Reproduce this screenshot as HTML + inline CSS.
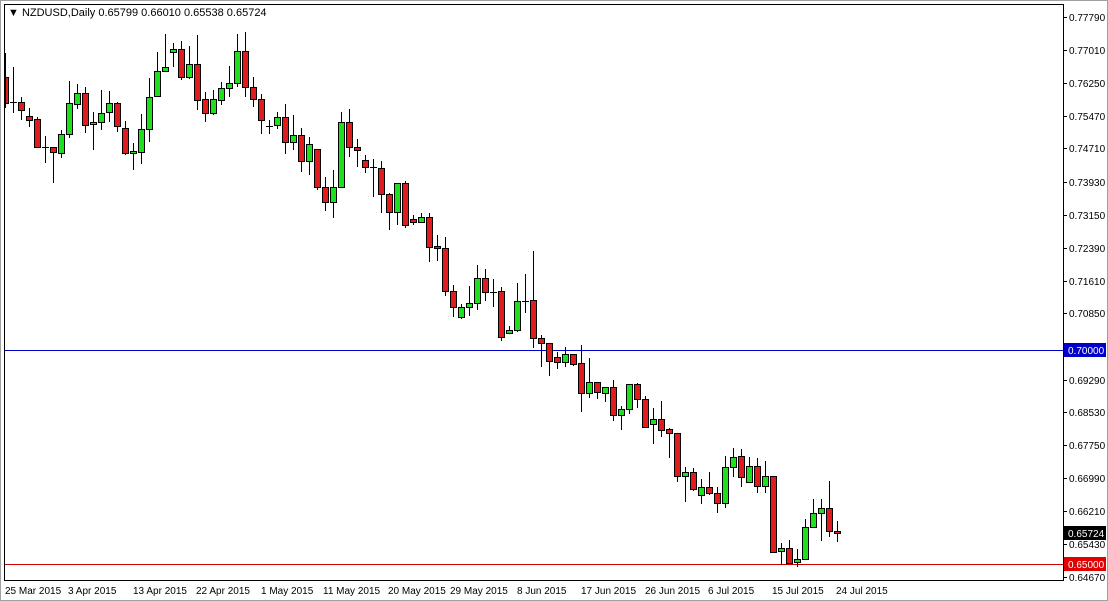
<!DOCTYPE html>
<html><head><meta charset="utf-8"><style>
html,body{margin:0;padding:0;background:#fff}
body{width:1108px;height:601px;overflow:hidden;position:relative}
svg{position:absolute;left:0;top:0}
svg text{font-family:"Liberation Sans",sans-serif;font-size:10px;fill:#000}
.r{fill:#e01c1c;stroke:#000;stroke-width:1}
.g{fill:#1ee01e;stroke:#000;stroke-width:1}
.w{stroke:#000;stroke-width:1}
</style></head><body>
<svg width="1108" height="601" viewBox="0 0 1108 601" shape-rendering="crispEdges">
<rect x="0" y="0" width="1108" height="601" fill="#fff"/>
<rect x="0.5" y="0.5" width="1107" height="600" fill="none" stroke="#a0a0a0"/>
<rect x="4.5" y="4.5" width="1059" height="576" fill="none" stroke="#000"/>
<line x1="5" y1="350.5" x2="1063" y2="350.5" stroke="#0000c8"/>
<line x1="5" y1="564.5" x2="1063" y2="564.5" stroke="#c80000"/>
<text x="8" y="16" style="font-size:11px">&#9660; NZDUSD,Daily  0.65799 0.66010 0.65538 0.65724</text>
<g>
<line class="w" x1="5.5" y1="53" x2="5.5" y2="108"/><rect class="r" x="5.5" y="77.5" width="3" height="26"/>
<line class="w" x1="13.5" y1="67" x2="13.5" y2="113"/><line class="w" x1="10" y1="102.5" x2="17" y2="102.5"/>
<line class="w" x1="21.5" y1="97" x2="21.5" y2="120"/><rect class="r" x="18.5" y="102.5" width="6" height="8"/>
<line class="w" x1="29.5" y1="108" x2="29.5" y2="127"/><rect class="r" x="26.5" y="116.5" width="6" height="4"/>
<line class="w" x1="37.5" y1="117" x2="37.5" y2="147"/><rect class="r" x="34.5" y="119.5" width="6" height="28"/>
<line class="w" x1="45.5" y1="136" x2="45.5" y2="163"/><line class="w" x1="42" y1="147.5" x2="49" y2="147.5"/>
<line class="w" x1="53.5" y1="147" x2="53.5" y2="183"/><rect class="r" x="50.5" y="147.5" width="6" height="5"/>
<line class="w" x1="61.5" y1="130" x2="61.5" y2="158"/><rect class="g" x="58.5" y="134.5" width="6" height="19"/>
<line class="w" x1="69.5" y1="81" x2="69.5" y2="138"/><rect class="g" x="66.5" y="103.5" width="6" height="31"/>
<line class="w" x1="77.5" y1="84" x2="77.5" y2="109"/><rect class="g" x="74.5" y="93.5" width="6" height="11"/>
<line class="w" x1="85.5" y1="87" x2="85.5" y2="133"/><rect class="r" x="82.5" y="93.5" width="6" height="32"/>
<line class="w" x1="93.5" y1="112" x2="93.5" y2="150"/><rect class="g" x="90.5" y="122.5" width="6" height="2"/>
<line class="w" x1="101.5" y1="90" x2="101.5" y2="130"/><rect class="g" x="98.5" y="113.5" width="6" height="9"/>
<line class="w" x1="109.5" y1="91" x2="109.5" y2="122"/><rect class="g" x="106.5" y="103.5" width="6" height="9"/>
<line class="w" x1="117.5" y1="102" x2="117.5" y2="132"/><rect class="r" x="114.5" y="103.5" width="6" height="23"/>
<line class="w" x1="125.5" y1="121" x2="125.5" y2="155"/><rect class="r" x="122.5" y="128.5" width="6" height="25"/>
<line class="w" x1="133.5" y1="143" x2="133.5" y2="170"/><rect class="g" x="130.5" y="151.5" width="6" height="2"/>
<line class="w" x1="141.5" y1="114" x2="141.5" y2="164"/><rect class="g" x="138.5" y="129.5" width="6" height="23"/>
<line class="w" x1="149.5" y1="78" x2="149.5" y2="142"/><rect class="g" x="146.5" y="97.5" width="6" height="32"/>
<line class="w" x1="157.5" y1="52" x2="157.5" y2="97"/><rect class="g" x="154.5" y="71.5" width="6" height="25"/>
<line class="w" x1="165.5" y1="34" x2="165.5" y2="72"/><rect class="g" x="162.5" y="67.5" width="6" height="4"/>
<line class="w" x1="173.5" y1="43" x2="173.5" y2="67"/><rect class="g" x="170.5" y="49.5" width="6" height="3"/>
<line class="w" x1="181.5" y1="41" x2="181.5" y2="80"/><rect class="r" x="178.5" y="49.5" width="6" height="28"/>
<line class="w" x1="189.5" y1="46" x2="189.5" y2="79"/><rect class="g" x="186.5" y="64.5" width="6" height="13"/>
<line class="w" x1="197.5" y1="35" x2="197.5" y2="110"/><rect class="r" x="194.5" y="64.5" width="6" height="36"/>
<line class="w" x1="205.5" y1="92" x2="205.5" y2="122"/><rect class="r" x="202.5" y="99.5" width="6" height="14"/>
<line class="w" x1="213.5" y1="90" x2="213.5" y2="115"/><rect class="g" x="210.5" y="99.5" width="6" height="14"/>
<line class="w" x1="221.5" y1="82" x2="221.5" y2="105"/><rect class="g" x="218.5" y="88.5" width="6" height="12"/>
<line class="w" x1="229.5" y1="66" x2="229.5" y2="97"/><rect class="g" x="226.5" y="83.5" width="6" height="5"/>
<line class="w" x1="237.5" y1="34" x2="237.5" y2="87"/><rect class="g" x="234.5" y="51.5" width="6" height="32"/>
<line class="w" x1="245.5" y1="32" x2="245.5" y2="97"/><rect class="r" x="242.5" y="51.5" width="6" height="36"/>
<line class="w" x1="253.5" y1="77" x2="253.5" y2="107"/><rect class="r" x="250.5" y="87.5" width="6" height="12"/>
<line class="w" x1="261.5" y1="94" x2="261.5" y2="134"/><rect class="r" x="258.5" y="99.5" width="6" height="21"/>
<line class="w" x1="269.5" y1="120" x2="269.5" y2="134"/><line class="w" x1="266" y1="126.5" x2="273" y2="126.5"/>
<line class="w" x1="277.5" y1="112" x2="277.5" y2="129"/><rect class="g" x="274.5" y="117.5" width="6" height="8"/>
<line class="w" x1="285.5" y1="104" x2="285.5" y2="154"/><rect class="r" x="282.5" y="117.5" width="6" height="25"/>
<line class="w" x1="293.5" y1="115" x2="293.5" y2="150"/><rect class="g" x="290.5" y="135.5" width="6" height="7"/>
<line class="w" x1="301.5" y1="128" x2="301.5" y2="172"/><rect class="r" x="298.5" y="135.5" width="6" height="26"/>
<line class="w" x1="309.5" y1="137" x2="309.5" y2="175"/><rect class="g" x="306.5" y="144.5" width="6" height="17"/>
<line class="w" x1="317.5" y1="149" x2="317.5" y2="190"/><rect class="r" x="314.5" y="149.5" width="6" height="38"/>
<line class="w" x1="325.5" y1="177" x2="325.5" y2="211"/><rect class="r" x="322.5" y="187.5" width="6" height="15"/>
<line class="w" x1="333.5" y1="170" x2="333.5" y2="218"/><rect class="g" x="330.5" y="187.5" width="6" height="15"/>
<line class="w" x1="341.5" y1="112" x2="341.5" y2="187"/><rect class="g" x="338.5" y="122.5" width="6" height="65"/>
<line class="w" x1="349.5" y1="109" x2="349.5" y2="157"/><rect class="r" x="346.5" y="122.5" width="6" height="25"/>
<line class="w" x1="357.5" y1="139" x2="357.5" y2="167"/><rect class="r" x="354.5" y="147.5" width="6" height="3"/>
<line class="w" x1="365.5" y1="155" x2="365.5" y2="173"/><rect class="r" x="362.5" y="160.5" width="6" height="7"/>
<line class="w" x1="373.5" y1="159" x2="373.5" y2="197"/><line class="w" x1="370" y1="167.5" x2="377" y2="167.5"/>
<line class="w" x1="381.5" y1="161" x2="381.5" y2="213"/><rect class="r" x="378.5" y="168.5" width="6" height="26"/>
<line class="w" x1="389.5" y1="193" x2="389.5" y2="230"/><rect class="r" x="386.5" y="194.5" width="6" height="18"/>
<line class="w" x1="397.5" y1="183" x2="397.5" y2="225"/><rect class="g" x="394.5" y="183.5" width="6" height="29"/>
<line class="w" x1="405.5" y1="181" x2="405.5" y2="228"/><rect class="r" x="402.5" y="183.5" width="6" height="42"/>
<line class="w" x1="413.5" y1="215" x2="413.5" y2="225"/><rect class="r" x="410.5" y="219.5" width="6" height="3"/>
<line class="w" x1="421.5" y1="213" x2="421.5" y2="223"/><rect class="g" x="418.5" y="217.5" width="6" height="5"/>
<line class="w" x1="429.5" y1="213" x2="429.5" y2="262"/><rect class="r" x="426.5" y="217.5" width="6" height="30"/>
<line class="w" x1="437.5" y1="235" x2="437.5" y2="261"/><rect class="r" x="434.5" y="246.5" width="6" height="2"/>
<line class="w" x1="445.5" y1="237" x2="445.5" y2="296"/><rect class="r" x="442.5" y="248.5" width="6" height="43"/>
<line class="w" x1="453.5" y1="285" x2="453.5" y2="317"/><rect class="r" x="450.5" y="291.5" width="6" height="16"/>
<line class="w" x1="461.5" y1="304" x2="461.5" y2="319"/><rect class="g" x="458.5" y="307.5" width="6" height="10"/>
<line class="w" x1="469.5" y1="286" x2="469.5" y2="316"/><rect class="g" x="466.5" y="303.5" width="6" height="4"/>
<line class="w" x1="477.5" y1="265" x2="477.5" y2="310"/><rect class="g" x="474.5" y="278.5" width="6" height="25"/>
<line class="w" x1="485.5" y1="269" x2="485.5" y2="301"/><rect class="r" x="482.5" y="278.5" width="6" height="14"/>
<line class="w" x1="493.5" y1="279" x2="493.5" y2="307"/><line class="w" x1="490" y1="292.5" x2="497" y2="292.5"/>
<line class="w" x1="501.5" y1="287" x2="501.5" y2="341"/><rect class="r" x="498.5" y="291.5" width="6" height="46"/>
<line class="w" x1="509.5" y1="326" x2="509.5" y2="333"/><rect class="g" x="506.5" y="330.5" width="6" height="3"/>
<line class="w" x1="517.5" y1="283" x2="517.5" y2="332"/><rect class="g" x="514.5" y="301.5" width="6" height="29"/>
<line class="w" x1="525.5" y1="274" x2="525.5" y2="313"/><line class="w" x1="522" y1="301.5" x2="529" y2="301.5"/>
<line class="w" x1="533.5" y1="251" x2="533.5" y2="348"/><rect class="r" x="530.5" y="300.5" width="6" height="38"/>
<line class="w" x1="541.5" y1="335" x2="541.5" y2="367"/><rect class="r" x="538.5" y="338.5" width="6" height="5"/>
<line class="w" x1="549.5" y1="343" x2="549.5" y2="376"/><rect class="r" x="546.5" y="343.5" width="6" height="18"/>
<line class="w" x1="557.5" y1="352" x2="557.5" y2="369"/><rect class="r" x="554.5" y="357.5" width="6" height="5"/>
<line class="w" x1="565.5" y1="347" x2="565.5" y2="367"/><rect class="g" x="562.5" y="354.5" width="6" height="8"/>
<line class="w" x1="573.5" y1="354" x2="573.5" y2="366"/><rect class="r" x="570.5" y="354.5" width="6" height="10"/>
<line class="w" x1="581.5" y1="345" x2="581.5" y2="412"/><rect class="r" x="578.5" y="363.5" width="6" height="30"/>
<line class="w" x1="589.5" y1="358" x2="589.5" y2="398"/><rect class="g" x="586.5" y="382.5" width="6" height="11"/>
<line class="w" x1="597.5" y1="382" x2="597.5" y2="399"/><rect class="r" x="594.5" y="382.5" width="6" height="10"/>
<line class="w" x1="605.5" y1="387" x2="605.5" y2="402"/><rect class="g" x="602.5" y="387.5" width="6" height="6"/>
<line class="w" x1="613.5" y1="380" x2="613.5" y2="421"/><rect class="r" x="610.5" y="387.5" width="6" height="28"/>
<line class="w" x1="621.5" y1="406" x2="621.5" y2="430"/><rect class="g" x="618.5" y="409.5" width="6" height="6"/>
<line class="w" x1="629.5" y1="384" x2="629.5" y2="414"/><rect class="g" x="626.5" y="384.5" width="6" height="25"/>
<line class="w" x1="637.5" y1="383" x2="637.5" y2="408"/><rect class="r" x="634.5" y="384.5" width="6" height="15"/>
<line class="w" x1="645.5" y1="396" x2="645.5" y2="428"/><rect class="r" x="642.5" y="399.5" width="6" height="28"/>
<line class="w" x1="653.5" y1="408" x2="653.5" y2="444"/><rect class="g" x="650.5" y="419.5" width="6" height="5"/>
<line class="w" x1="661.5" y1="401" x2="661.5" y2="437"/><rect class="r" x="658.5" y="419.5" width="6" height="11"/>
<line class="w" x1="669.5" y1="428" x2="669.5" y2="458"/><rect class="r" x="666.5" y="429.5" width="6" height="4"/>
<line class="w" x1="677.5" y1="433" x2="677.5" y2="482"/><rect class="r" x="674.5" y="433.5" width="6" height="43"/>
<line class="w" x1="685.5" y1="467" x2="685.5" y2="502"/><rect class="g" x="682.5" y="472.5" width="6" height="4"/>
<line class="w" x1="693.5" y1="468" x2="693.5" y2="491"/><rect class="r" x="690.5" y="472.5" width="6" height="17"/>
<line class="w" x1="701.5" y1="479" x2="701.5" y2="504"/><rect class="g" x="698.5" y="487.5" width="6" height="8"/>
<line class="w" x1="709.5" y1="472" x2="709.5" y2="495"/><rect class="r" x="706.5" y="487.5" width="6" height="6"/>
<line class="w" x1="717.5" y1="487" x2="717.5" y2="513"/><rect class="r" x="714.5" y="493.5" width="6" height="10"/>
<line class="w" x1="725.5" y1="456" x2="725.5" y2="508"/><rect class="g" x="722.5" y="467.5" width="6" height="36"/>
<line class="w" x1="733.5" y1="448" x2="733.5" y2="477"/><rect class="g" x="730.5" y="457.5" width="6" height="10"/>
<line class="w" x1="741.5" y1="449" x2="741.5" y2="487"/><rect class="r" x="738.5" y="456.5" width="6" height="21"/>
<line class="w" x1="749.5" y1="457" x2="749.5" y2="483"/><rect class="g" x="746.5" y="466.5" width="6" height="16"/>
<line class="w" x1="757.5" y1="458" x2="757.5" y2="493"/><rect class="r" x="754.5" y="466.5" width="6" height="20"/>
<line class="w" x1="765.5" y1="461" x2="765.5" y2="493"/><rect class="g" x="762.5" y="476.5" width="6" height="10"/>
<line class="w" x1="773.5" y1="476" x2="773.5" y2="553"/><rect class="r" x="770.5" y="476.5" width="6" height="76"/>
<line class="w" x1="781.5" y1="543" x2="781.5" y2="565"/><rect class="g" x="778.5" y="548.5" width="6" height="3"/>
<line class="w" x1="789.5" y1="540" x2="789.5" y2="564"/><rect class="r" x="786.5" y="548.5" width="6" height="15"/>
<line class="w" x1="797.5" y1="549" x2="797.5" y2="567"/><rect class="g" x="794.5" y="559.5" width="6" height="3"/>
<line class="w" x1="805.5" y1="519" x2="805.5" y2="559"/><rect class="g" x="802.5" y="527.5" width="6" height="32"/>
<line class="w" x1="813.5" y1="499" x2="813.5" y2="528"/><rect class="g" x="810.5" y="513.5" width="6" height="14"/>
<line class="w" x1="821.5" y1="499" x2="821.5" y2="541"/><rect class="g" x="818.5" y="508.5" width="6" height="5"/>
<line class="w" x1="829.5" y1="481" x2="829.5" y2="537"/><rect class="r" x="826.5" y="508.5" width="6" height="23"/>
<line class="w" x1="837.5" y1="521" x2="837.5" y2="542"/><rect class="r" x="834.5" y="531.5" width="6" height="2"/>
</g>
<g stroke="#000">
<line x1="1063" y1="17.5" x2="1067" y2="17.5"/><line x1="1063" y1="50.5" x2="1067" y2="50.5"/>
<line x1="1063" y1="83.5" x2="1067" y2="83.5"/><line x1="1063" y1="116.5" x2="1067" y2="116.5"/>
<line x1="1063" y1="148.5" x2="1067" y2="148.5"/><line x1="1063" y1="182.5" x2="1067" y2="182.5"/>
<line x1="1063" y1="215.5" x2="1067" y2="215.5"/><line x1="1063" y1="248.5" x2="1067" y2="248.5"/>
<line x1="1063" y1="281.5" x2="1067" y2="281.5"/><line x1="1063" y1="313.5" x2="1067" y2="313.5"/>
<line x1="1063" y1="380.5" x2="1067" y2="380.5"/><line x1="1063" y1="412.5" x2="1067" y2="412.5"/>
<line x1="1063" y1="445.5" x2="1067" y2="445.5"/><line x1="1063" y1="478.5" x2="1067" y2="478.5"/>
<line x1="1063" y1="511.5" x2="1067" y2="511.5"/><line x1="1063" y1="544.5" x2="1067" y2="544.5"/>
<line x1="1063" y1="577.5" x2="1067" y2="577.5"/>
</g>
<g>
<text x="1069" y="21">0.77790</text><text x="1069" y="54">0.77010</text>
<text x="1069" y="87">0.76250</text><text x="1069" y="120">0.75470</text>
<text x="1069" y="152">0.74710</text><text x="1069" y="186">0.73930</text>
<text x="1069" y="219">0.73150</text><text x="1069" y="252">0.72390</text>
<text x="1069" y="285">0.71610</text><text x="1069" y="317">0.70850</text>
<text x="1069" y="384">0.69290</text><text x="1069" y="416">0.68530</text>
<text x="1069" y="449">0.67750</text><text x="1069" y="482">0.66990</text>
<text x="1069" y="515">0.66210</text><text x="1069" y="548">0.65430</text>
<text x="1069" y="581">0.64670</text>
</g>
<rect x="1064" y="343" width="42" height="14" fill="#0000c8"/>
<text x="1068" y="354" style="fill:#fff">0.70000</text>
<rect x="1064" y="526" width="42" height="14" fill="#000"/>
<text x="1068" y="537" style="fill:#fff">0.65724</text>
<rect x="1064" y="557" width="42" height="14" fill="#e00000"/>
<text x="1068" y="568" style="fill:#fff">0.65000</text>
<g>
<text x="5" y="594">25 Mar 2015</text><text x="68" y="594">3 Apr 2015</text>
<text x="133" y="594">13 Apr 2015</text><text x="196" y="594">22 Apr 2015</text>
<text x="261" y="594">1 May 2015</text><text x="323" y="594">11 May 2015</text>
<text x="388" y="594">20 May 2015</text><text x="450" y="594">29 May 2015</text>
<text x="517" y="594">8 Jun 2015</text><text x="581" y="594">17 Jun 2015</text>
<text x="645" y="594">26 Jun 2015</text><text x="708" y="594">6 Jul 2015</text>
<text x="772" y="594">15 Jul 2015</text><text x="836" y="594">24 Jul 2015</text>
</g>
</svg>
</body></html>
